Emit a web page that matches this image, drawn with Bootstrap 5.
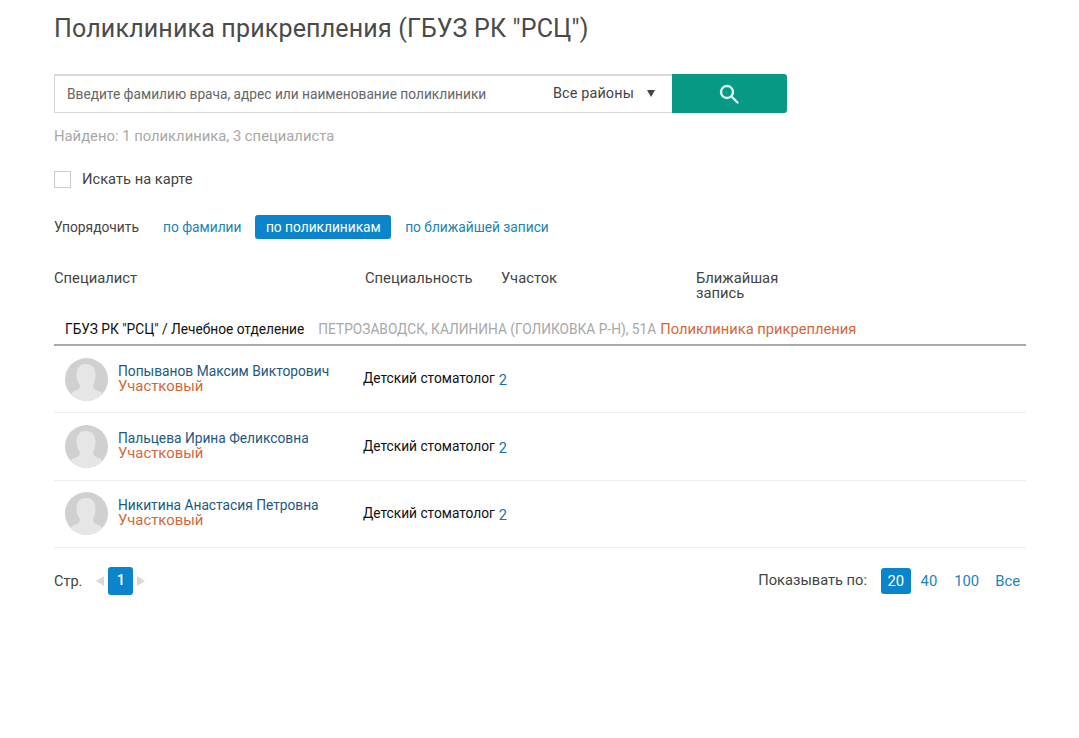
<!doctype html>
<html lang="ru"><head><meta charset="utf-8">
<link href="https://cdn.jsdelivr.net/npm/bootstrap@5.3.0/dist/css/bootstrap.min.css" rel="stylesheet">
<style>
body{font-family:Roboto,"Liberation Sans",sans-serif;background:#fff;color:#444;font-size:14px;overflow:hidden}
.pg{padding:12px 53px 0 54px;height:738px}
.ttl{font-size:25px;font-weight:400;line-height:34px;color:#4a4a4a;margin:0;letter-spacing:.17px}
.srch{width:733px;height:39px;margin-top:28px}
.srch-box{flex:1;border:1px solid #d8d8d8;border-top-width:2px;border-right:0;padding:0 13px 0 12px;font-size:13.72px;color:#666}
.dist{color:#444;font-size:14.4px;letter-spacing:.15px}
.tri{width:0;height:0;border-left:4.5px solid transparent;border-right:4.5px solid transparent;border-top:7px solid #444;margin:0 4px 0 13px}
.srch-btn{width:115px;background:#069984;border-radius:0 3px 3px 0}
.srch-ico{margin-right:2px}
.found{color:#a8a8a8;margin-top:13px;line-height:20px;font-size:14.8px}
.chk{width:17px;height:17px;border:1px solid #ccc;margin-right:11px}
.mapline{margin-top:23px;height:20px;font-size:14.7px}
.sortline{margin-top:26px;height:24px;font-size:13.72px}
.sortlbl{width:109px;font-size:13.8px}
.lnk{color:#1b84b8;text-decoration:none}
.pill{background:#0a85cc;color:#fff;border-radius:3px;padding:0 10.5px;line-height:24px;text-decoration:none;margin:0 14px}
.head{margin-top:24px;height:54px;font-size:14.75px;line-height:15px}
.c1{width:311px}.c2{width:136px}.c3{width:195px}.c4{width:100px}
.grp{height:31px;border-bottom:2px solid #aaa;padding:0 0 2px 11px;font-size:13.72px;line-height:18px;margin-top:-2px}
.org{color:#111}
.addr{color:#a8a8a8;margin-left:14px}.att{color:#d4683a;margin-left:4px;font-size:14.7px}
.rowi{height:67.3px;border-bottom:1px solid #eee;padding-left:11px}
.ava{width:43px;height:43px;border-radius:50%;background:#d0d0d0;overflow:hidden;flex:none}
.who{width:245px;margin-left:10px;line-height:15px;padding-bottom:1px}
.nm{color:#21597f;font-size:13.75px;display:block}
.rl{color:#d4683a;font-size:14.9px;display:block}
.spec{color:#111;font-size:13.72px;margin-top:-1px;white-space:nowrap}
.uch{color:#1b6fa5;font-size:14.6px;margin-left:4px;position:relative;top:2px}
.foot{margin-top:19px;height:28px;padding-right:6px;font-size:14.5px}
.pgnlbl{padding-top:1px}
.num{background:#0a85cc;color:#fff;border-radius:3px;width:25px;height:28px;line-height:28px;text-align:center;font-weight:500}
.arr{width:0;height:0;border-top:5px solid transparent;border-bottom:5px solid transparent}
.al{border-right:8px solid #d8d8d8;margin:0 4px 0 14px}.ar{border-left:8px solid #d8d8d8;margin-left:4px}
.szlbl{margin-right:14px;font-size:14.65px}
.sz{background:#0a85cc;color:#fff;border-radius:3px;padding:0 6.500px;line-height:26px}
.szl{font-size:14.8px}
.g1{margin-left:10px}.g2{margin-left:17px}.g3{margin-left:16px}
</style></head><body>
<div class="pg">
<h1 class="ttl">Поликлиника прикрепления (ГБУЗ РК "РСЦ")</h1>
<div class="srch d-flex">
 <div class="srch-box d-flex align-items-center justify-content-between"><span>Введите фамилию врача, адрес или наименование поликлиники</span>
  <span class="d-flex align-items-center"><span class="dist">Все районы</span><span class="tri"></span></span></div>
 <div class="srch-btn d-flex align-items-center justify-content-center">
  <svg class="srch-ico" width="20" height="20" viewBox="0 0 20 20" fill="none" stroke="#d8f5ef" stroke-width="2.4"><circle cx="8" cy="8" r="6"/><path d="M12.5 12.5 18.5 18.5" stroke-linecap="round"/></svg></div>
</div>
<div class="found">Найдено: 1 поликлиника, 3 специалиста</div>
<div class="mapline d-flex align-items-center"><span class="chk"></span><span>Искать на карте</span></div>
<div class="sortline d-flex align-items-center"><span class="sortlbl">Упорядочить</span><a class="lnk" href="#">по фамилии</a><a class="pill" href="#">по поликлиникам</a><a class="lnk" href="#">по ближайшей записи</a></div>
<div class="head d-flex"><div class="c1 pt-2">Специалист</div><div class="c2 pt-2">Специальность</div><div class="c3 pt-2">Участок</div><div class="c4 pt-2">Ближайшая запись</div></div>
<div class="grp d-flex align-items-center"><span class="org">ГБУЗ РК "РСЦ" / Лечебное отделение</span><span class="addr">ПЕТРОЗАВОДСК, КАЛИНИНА (ГОЛИКОВКА Р-Н), 51А</span><span class="att">Поликлиника прикрепления</span></div>
<div class="rowi d-flex align-items-center"><div class="ava"><svg viewBox="0 0 43 43" width="43" height="43"><path d="M21 6c6.500 0 9.500 4.500 9.500 11 0 5-1.500 8-2.500 10.500 0 3 2 4.500 8 6.500l4 9H3l4-9c6-2 8-3.500 8-6.500-1.500-2.500-3.500-5.500-3.500-10.500C11.500 10.500 14.500 6 21 6z" fill="#e6e6e6"/></svg></div><div class="who"><span class="nm">Попыванов Максим Викторович</span><span class="rl">Участковый</span></div><span class="spec">Детский стоматолог</span><span class="uch">2</span></div>
<div class="rowi d-flex align-items-center"><div class="ava"><svg viewBox="0 0 43 43" width="43" height="43"><path d="M21 6c6.500 0 9.500 4.500 9.500 11 0 5-1.500 8-2.500 10.500 0 3 2 4.500 8 6.500l4 9H3l4-9c6-2 8-3.500 8-6.500-1.500-2.500-3.500-5.500-3.500-10.500C11.500 10.500 14.500 6 21 6z" fill="#e6e6e6"/></svg></div><div class="who"><span class="nm">Пальцева Ирина Феликсовна</span><span class="rl">Участковый</span></div><span class="spec">Детский стоматолог</span><span class="uch">2</span></div>
<div class="rowi d-flex align-items-center"><div class="ava"><svg viewBox="0 0 43 43" width="43" height="43"><path d="M21 6c6.500 0 9.500 4.500 9.500 11 0 5-1.500 8-2.500 10.500 0 3 2 4.500 8 6.500l4 9H3l4-9c6-2 8-3.500 8-6.500-1.500-2.500-3.500-5.500-3.500-10.500C11.500 10.500 14.500 6 21 6z" fill="#e6e6e6"/></svg></div><div class="who"><span class="nm">Никитина Анастасия Петровна</span><span class="rl">Участковый</span></div><span class="spec">Детский стоматолог</span><span class="uch">2</span></div>
<div class="foot d-flex align-items-center justify-content-between">
 <div class="d-flex align-items-center"><span class="pgnlbl">Стр.</span><span class="arr al"></span><span class="num">1</span><span class="arr ar"></span></div>
 <div class="d-flex align-items-center szl"><span class="szlbl">Показывать по:</span><span class="sz">20</span><a class="lnk g1" href="#">40</a><a class="lnk g2" href="#">100</a><a class="lnk g3" href="#">Все</a></div>
</div>
</div>
<script src="https://cdn.jsdelivr.net/npm/bootstrap@5.3.0/dist/js/bootstrap.bundle.min.js"></script>
</body></html>
